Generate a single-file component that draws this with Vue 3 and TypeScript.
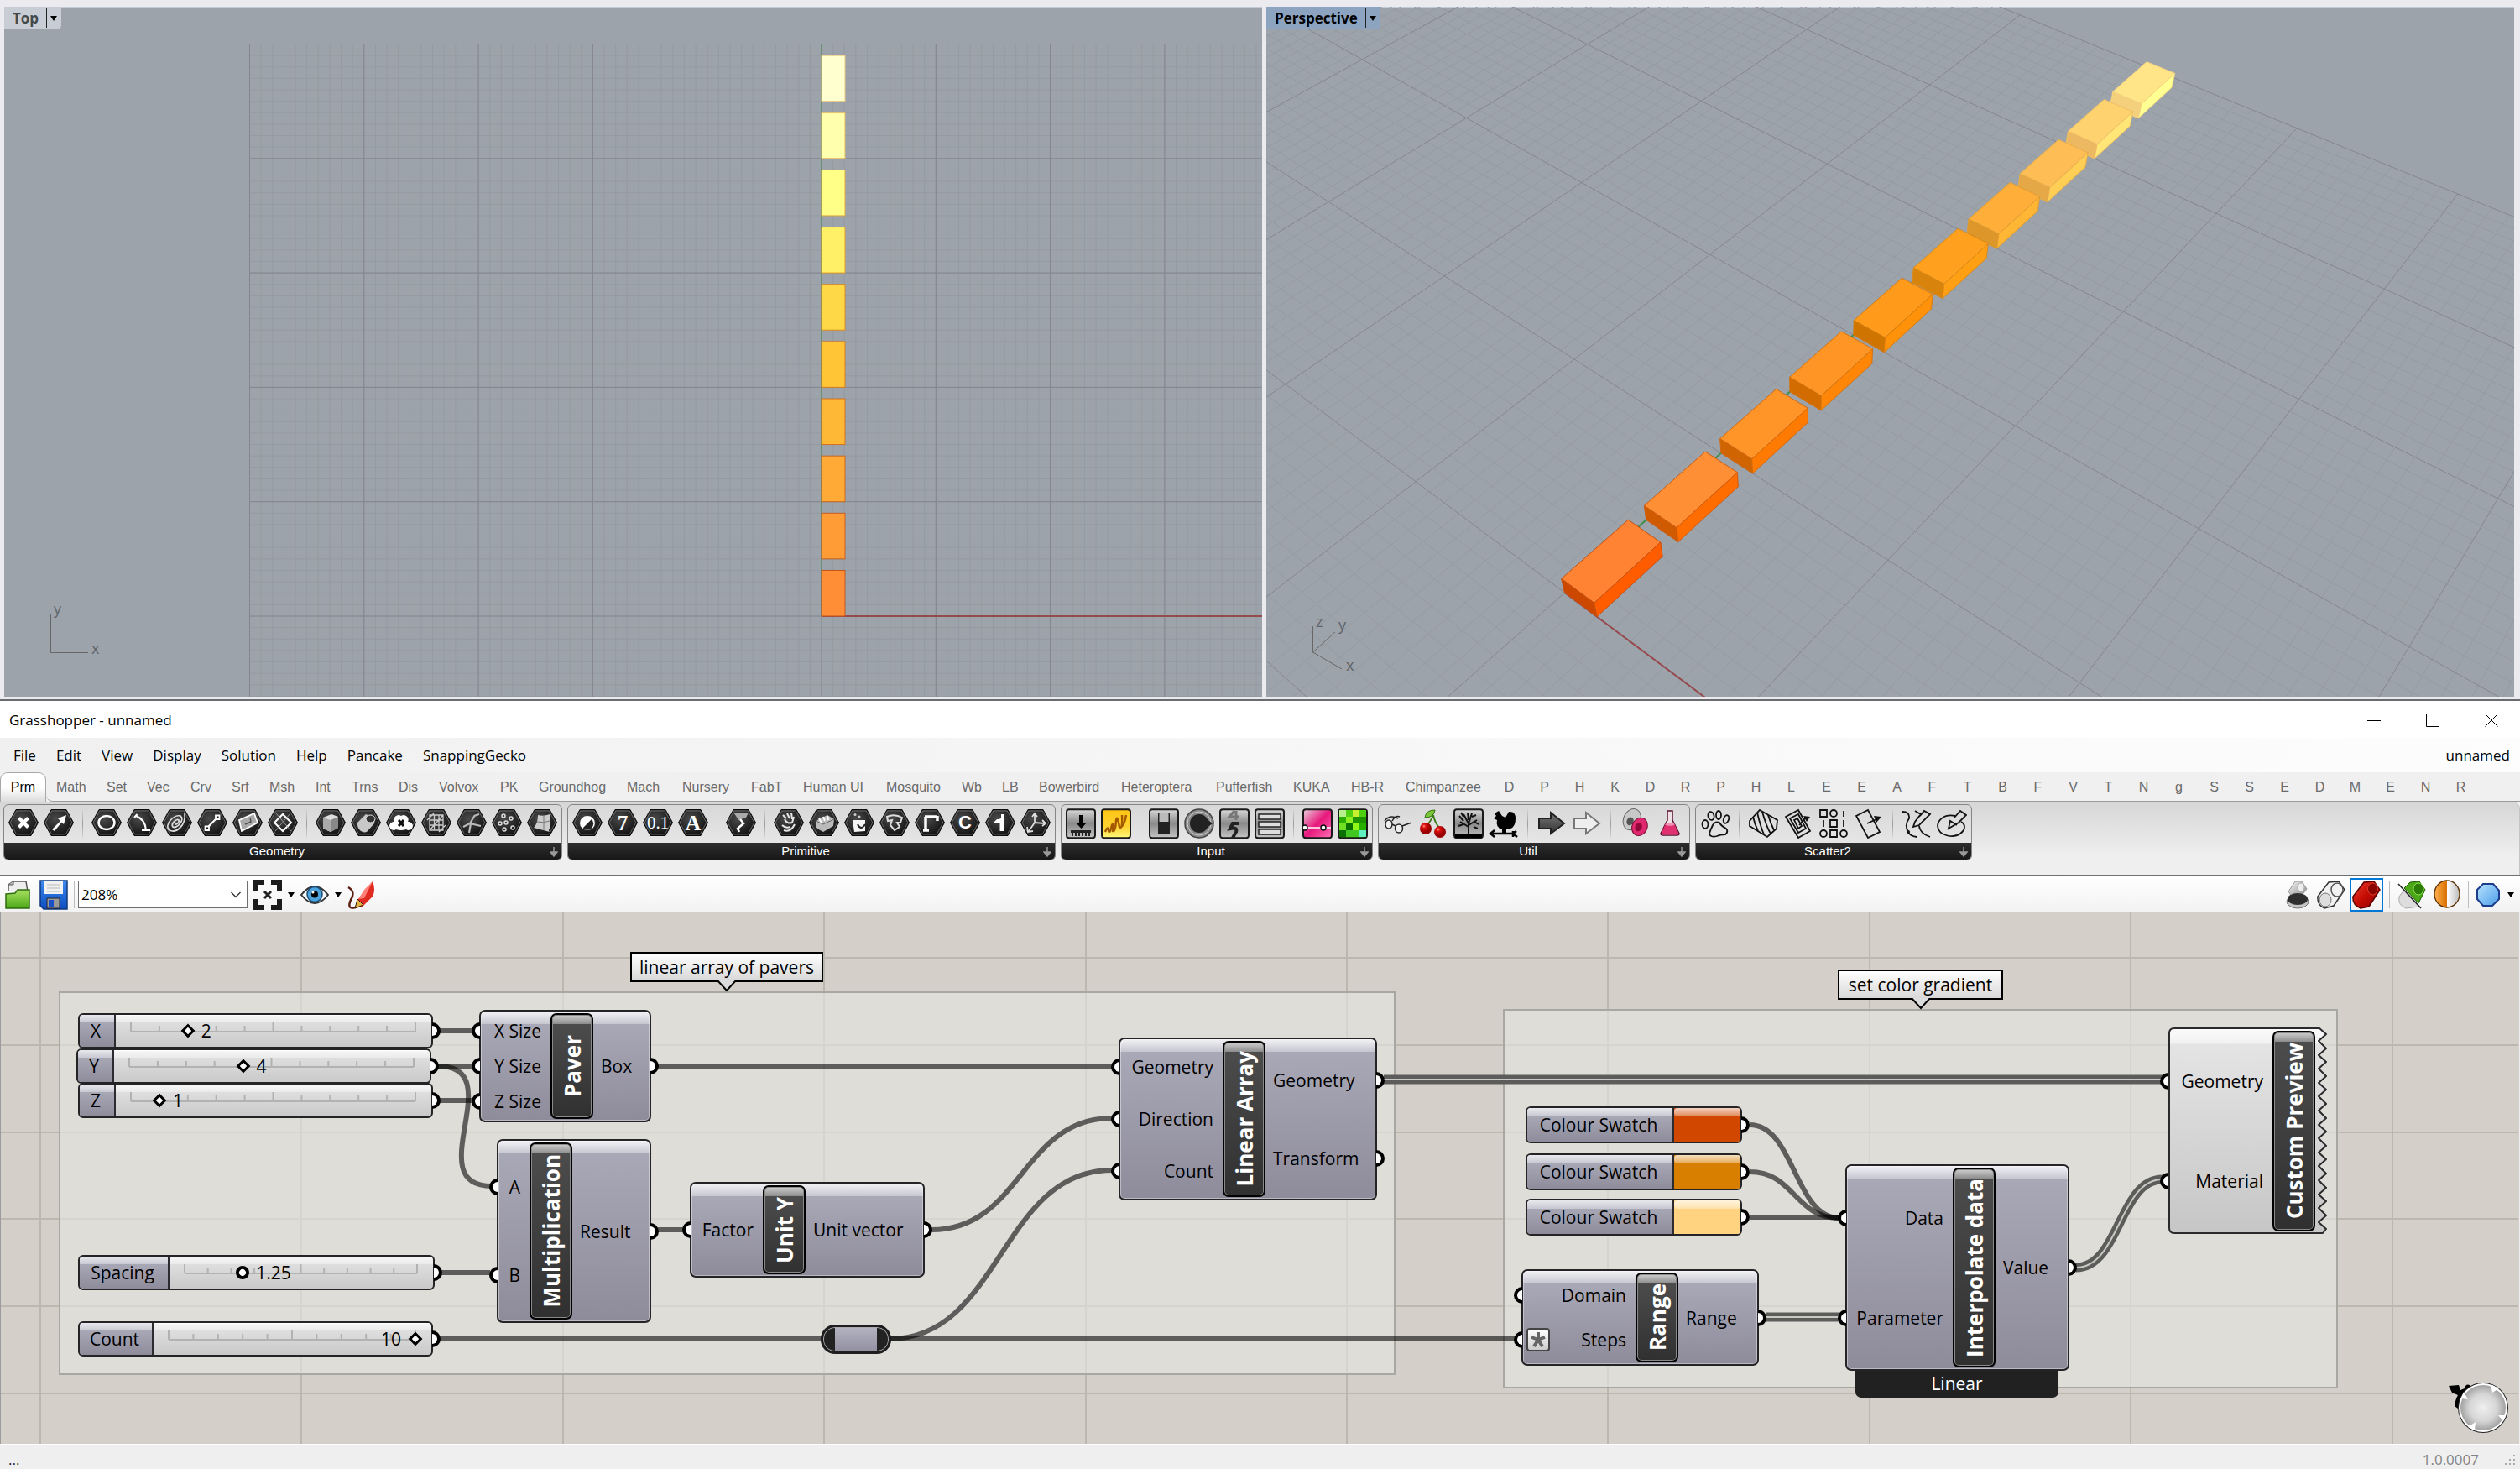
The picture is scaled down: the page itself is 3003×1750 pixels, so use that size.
<script setup lang="ts">
import { ref, computed } from 'vue'

interface Tab { name: string; width: number }
interface Panel { name: string; items: string[] }
interface Slider { name: string; x: number; y: number; w: number; label: number; min: number; max: number; step: number; value: number; round?: boolean; before?: boolean; mid: number }
interface NodeBox { title: string; x: number; y: number; w: number; h: number; lead: number; inputs: string[]; outputs: string[]; foot?: string; boxed?: string }
interface Segment { x1: number; y1: number; x2: number; y2: number; major: boolean }

/* ---------- top viewport ---------- */
const unit = 13.63
const originX = 974
const originY = 726
const gridLeft = originX - 50 * unit
const gridTop = originY - 50 * unit
const steps = Array.from({ length: 101 }, (_, i) => i)
const planColors = ['#ff8e36', '#ff9c36', '#ffaa36', '#ffb836', '#ffc536', '#ffd848', '#fff068', '#ffff88', '#ffffae', '#ffffd0']
const edgeColors = ['#c4561c', '#c9601c', '#cd681c', '#d2721c', '#d67c1c', '#da881c', '#e09a28', '#e2aa40', '#e6b860', '#ecc880']
const plan = planColors.map((fill, i) => ({
  fill,
  stroke: edgeColors[i],
  y: originY - (5 * i + 4) * unit,
}))

/* ---------- perspective viewport ---------- */
function project(x: number, y: number, z = 0): [number, number] {
  const w = 1 - 0.00704 * x + 0.00904 * y - 0.01285 * z
  return [
    355.5 + (18.98 * x + 20.32 * y - 3.75 * z) / w,
    698 + (14.16 * x - 18.12 * y - 16.39 * z) / w,
  ]
}
function pts(list: [number, number, number][]): string {
  return list.map((p) => project(p[0], p[1], p[2]).map((n) => n.toFixed(1)).join(',')).join(' ')
}
const floor: Segment[] = []
for (const major of [false, true]) {
  for (let i = -50; i <= 50; i++) {
    if ((i % 10 === 0) !== major) continue
    const a = project(i, -50), b = project(i, 50)
    const c = project(-50, i), d = project(50, i)
    floor.push({ x1: a[0], y1: a[1], x2: b[0], y2: b[1], major })
    floor.push({ x1: c[0], y1: c[1], x2: d[0], y2: d[1], major })
  }
}
const shades = [
  ['#ff8333', '#cc4700', '#ff5c00', '#c65010'],
  ['#ff8f34', '#d05a00', '#ff6c00', '#cc5c10'],
  ['#ff9429', '#d06400', '#ff7a00', '#d06a10'],
  ['#ff9524', '#d26c00', '#ff8606', '#d27410'],
  ['#ff9a1a', '#d07400', '#ff9208', '#d47c10'],
  ['#ffa01f', '#d8840c', '#ffa014', '#da8a18'],
  ['#ffae3a', '#dc962a', '#ffb634', '#e09c30'],
  ['#ffbe55', '#e4a846', '#ffce54', '#e8ae4c'],
  ['#ffd270', '#ecb862', '#ffe676', '#eebe66'],
  ['#ffe488', '#f5d07c', '#ffff92', '#f4d480'],
]
const solids = shades.map((s, i) => {
  const a = 5 * i, b = a + 4
  return {
    stroke: s[3],
    faces: [
      { fill: s[0], points: pts([[0, a, 1], [2, a, 1], [2, b, 1], [0, b, 1]]) },
      { fill: s[1], points: pts([[0, a, 0], [2, a, 0], [2, a, 1], [0, a, 1]]) },
      { fill: s[2], points: pts([[2, a, 0], [2, b, 0], [2, b, 1], [2, a, 1]]) },
    ],
  }
}).reverse()
const o = project(0, 0), xEnd = project(40, 0), yEnd = project(0, 50)

/* ---------- menus and tabs ---------- */
const menus = ['File', 'Edit', 'View', 'Display', 'Solution', 'Help', 'Pancake', 'SnappingGecko']
const tabs: Tab[] = [
  { name: 'Math', width: 60 }, { name: 'Set', width: 48 }, { name: 'Vec', width: 52 }, { name: 'Crv', width: 49 },
  { name: 'Srf', width: 45 }, { name: 'Msh', width: 55 }, { name: 'Int', width: 43 }, { name: 'Trns', width: 56 },
  { name: 'Dis', width: 48 }, { name: 'Volvox', width: 73 }, { name: 'PK', width: 46 }, { name: 'Groundhog', width: 105 },
  { name: 'Mach', width: 66 }, { name: 'Nursery', width: 82 }, { name: 'FabT', width: 62 }, { name: 'Human UI', width: 99 },
  { name: 'Mosquito', width: 90 }, { name: 'Wb', width: 48 }, { name: 'LB', width: 44 }, { name: 'Bowerbird', width: 98 },
  { name: 'Heteroptera', width: 113 }, { name: 'Pufferfish', width: 92 }, { name: 'KUKA', width: 69 }, { name: 'HB-R', width: 65 },
  { name: 'Chimpanzee', width: 102 },
]
const letters = 'DPHKDRPHLEEAFTBFVTNgSSEDMENR'.split('')

/* ---------- ribbon icons ---------- */
const hex = (inner: string) =>
  `<path d="M9 1.5H27L35.5 17L27 32.5H9L.5 17Z" fill="url(#g-hex)" stroke="#0c0c0c"/><path d="M9.8 3H26.2L33.8 17L26.2 31H9.8L2.2 17Z" fill="none" stroke="#777" stroke-width=".8"/>${inner}`
const tile = (inner: string, fill = 'url(#g-tile)') =>
  `<rect x="1" y="1.2" width="34" height="34" rx="3" fill="${fill}" stroke="#1a1a1a" stroke-width="2"/>${inner}`
const w = 'fill="none" stroke="#fff" stroke-width="2"'
const k = 'fill="none" stroke="#111" stroke-width="1.8"'
const letter = (s: string, size: number, family = 'Liberation Serif', weight = 700) =>
  `<text x="18" y="${17 + size * 0.34}" text-anchor="middle" font-family="${family}" font-weight="${weight}" font-size="${size}" fill="#fff">${s}</text>`

const icons: Record<string, string> = {
  point: hex(`<path d="M12.5 11.500L23.500 22.500M23.500 11.500L12.500 22.500" fill="none" stroke="#fff" stroke-width="4"/>`),
  vector: hex(`<path d="M10 25L20 15L17 12L27 8L24 19L21.500 16.500L13 27Z" fill="#fff"/>`),
  circle: hex(`<ellipse cx="18" cy="17" rx="9.500" ry="8" fill="none" stroke="#fff" stroke-width="2.500"/>`),
  arc: hex(`<path d="M11 9Q22 13 23 26M9 11L12.500 7M18 26H28" ${w}/>`),
  curve: hex(`<path d="M27 6C29 20 17 30 9 26C2 20 14 7 22 9C28 14 17 25 13 22C10 18 18 12 20 14C21 17 18 19 16 19" fill="none" stroke="#ddd" stroke-width="1.800"/>`),
  line: hex(`<path d="M12 23L24 11" ${w}/><path d="M9.500 21.500H14V26H9.500ZM22 8.500H26.500V13H22Z" fill="#111" stroke="#fff" stroke-width="1.800"/>`),
  plane: hex(`<path d="M8 14L26 6L30 17L11 27Z" fill="#aaa" stroke="#fff" stroke-width="1.800"/><path d="M15 19L22 16L21 11" fill="none" stroke="#555" stroke-width="1.500"/>`),
  rect: hex(`<path d="M18 7L28 17L18 27L8 17Z" ${w}/><path d="M10 6L28 27M27 6L9 27" stroke="#999" stroke-width="1"/>`),
  box: hex(`<path d="M9 11L19 7L27 10V23L18 28L9 24Z" fill="#ddd"/><path d="M9 11L18 14V28L9 24Z" fill="#aaa"/><path d="M18 14L27 10V23L18 28Z" fill="#888"/>`),
  brep: hex(`<path d="M8 17L18 7L29 12L28 18L19 28C13 30 7 24 8 17Z" fill="#c8c8c8"/><ellipse cx="23.500" cy="12.500" rx="5.500" ry="4.500" fill="#333" stroke="#eee"/>`),
  group: hex(`<path d="M12 25A5 5 0 1 1 10 16A5.500 5.500 0 0 1 18 9A5.500 5.500 0 0 1 26 16A5 5 0 1 1 24 25Q18 27 12 25Z" fill="#fff"/><path d="M15 14L21 21M21 14L15 21" stroke="#111" stroke-width="3"/>`),
  mesh: hex(`<path d="M10 8H26V26H10ZM10 14H26M10 20H26M15.500 8V26M21 8V26M7 14L15 6M21 28L29 20M10 26L26 8" fill="none" stroke="#ccc" stroke-width="1.300"/>`),
  voronoi: hex(`<path d="M8 22L16 18L22 8M16 18L29 21M17 18L15 29M21 9L27 7" fill="none" stroke="#bbb" stroke-width="2.200"/>`),
  points: hex(`<g fill="none" stroke="#ddd" stroke-width="1.500"><circle cx="14" cy="9" r="2"/><circle cx="23" cy="12" r="2"/><circle cx="10" cy="18" r="2"/><circle cx="17" cy="17" r="2"/><circle cx="25" cy="23" r="2"/><circle cx="15" cy="25" r="2"/></g>`),
  surface: hex(`<path d="M13 8Q20 10 27 7V24Q25 26 27 28L8 23Q13 18 13 8Z" fill="#ccc"/><path d="M20 9V26M12 16Q20 18 27 15" stroke="#777" fill="none"/>`),

  bool: hex(`<ellipse cx="18" cy="17.500" rx="9" ry="8.500" fill="#fff"/><path d="M23 13A6 6 0 0 1 12.500 23.500Z" fill="#222"/>`),
  integer: hex(letter('7', 25)),
  number: hex(letter('0.1', 21, 'Liberation Serif', 400)),
  text: hex(letter('A', 26)),
  colour: hex(`<path d="M9 5H27L24 11L15 14L12 9Z" fill="#aaa"/><path d="M17 13L21 18L14 24L16 28" fill="none" stroke="#fff" stroke-width="2.500"/>`),
  domain: hex(`<path d="M11 8L15 12M16 6L19 12M21 5L22 13M13 13Q16 19 22 17L24 10M10 20Q14 24 20 22M12 26Q20 29 25 19" fill="none" stroke="#e8e8e8" stroke-width="2"/>`),
  domain2: hex(`<path d="M8 15L22 8L30 13L29 21L17 28L8 23Z" fill="#bbb"/><path d="M12 12L15 17M17 10L19 15M22 9L23 14" stroke="#fff" stroke-width="2"/><path d="M8 15L17 19L30 13" fill="none" stroke="#666"/>`),
  matrix: hex(`<path d="M10 14H25V27L12 28Z" fill="#f4f4f4"/><circle cx="13" cy="7.500" r="1.500" fill="#ccc"/><circle cx="18" cy="10" r="1.500" fill="#ccc"/><path d="M16 19Q20 27 25 19" fill="none" stroke="#222" stroke-width="2"/>`),
  guid: hex(`<path d="M9 10Q18 6 27 11L25 17H21L24 22L18 26L13 20L15 14L10 15Z" fill="none" stroke="#ddd" stroke-width="2"/>`),
  path: hex(`<path d="M12 10H27M13 10V24M27 9V15M10 26H17" fill="none" stroke="#fff" stroke-width="3.500"/>`),
  culture: hex(letter('C', 22, 'Liberation Sans')),
  time: hex(`<path d="M10 17H19V27H23V7H19V13H14" fill="#fff"/><path d="M19 12V27" stroke="#fff" stroke-width="3"/>`),
  transform: hex(`<path d="M17 17V7M17 17L29 18M17 17L10 27M14 10L17 6L20 10M26 14L30 18L26 21M8 22L9 28L15 27" fill="none" stroke="#ddd" stroke-width="1.800"/>`),

  button: tile(`<path d="M16 8H21V17H25L18.500 24L12 17H16Z" fill="#000"/><path d="M6 26H30V29H6Z" fill="#222"/><path d="M8 29V33M12 29V33M16 29V33M20 29V33M24 29V33M28 29V33" stroke="#222" stroke-width="2"/>`),
  sketch: tile(`<path d="M5 28Q8 20 9 26Q10 32 13 20Q15 16 14 27Q17 28 18 15Q19 6 22 22Q26 26 25 8M24 22Q28 20 30 8" fill="none" stroke="#a65a00" stroke-width="2.500"/>`, 'url(#g-yellow)'),
  toggle: tile(`<path d="M11 5H25V31H11Z" fill="#222"/><path d="M12.500 6H23.500V16H12.500Z" fill="#bbb"/>`),
  knob: `<circle cx="18" cy="18" r="17" fill="#888" stroke="#444" stroke-width="1.500"/><circle cx="18" cy="18" r="14" fill="none" stroke="#ccc"/><circle cx="18" cy="18" r="11" fill="#222"/><path d="M26 12L34 18L26 24Z" fill="#222"/>`,
  digit: tile(`<path d="M18 3L12 10H23M20 3V14" fill="none" stroke="#777" stroke-width="3"/><path d="M24 18H16L13 24Q22 22 20 28L16 35" fill="none" stroke="#222" stroke-width="4"/>`),
  list: tile(`<g fill="#ddd" stroke="#222" stroke-width="1.500"><path d="M5 7H31V13H5ZM5 16H31V22H5ZM5 25H31V31H5Z"/></g>`),
  gradient: tile(`<path d="M2 23H34" stroke="#fff" stroke-width="1.500"/><g fill="#fff" stroke="#111" stroke-width="1.500"><circle cx="3" cy="23" r="3"/><circle cx="25" cy="23" r="3"/></g>`, 'url(#g-pink)'),
  image: tile(`<path d="M2 2H10V10H2Z" fill="#b8f090"/><path d="M10 2H18V10H10ZM26 2H34V10H26Z" fill="#4fd010"/><path d="M18 2H26V10H18Z" fill="#c8f030"/><path d="M2 10H10V18H2Z" fill="#2cae00"/><path d="M10 10H18V18H10Z" fill="#8cf020"/><path d="M18 10H34V18H18Z" fill="#209400"/><path d="M2 18H10V26H2Z" fill="#70e020"/><path d="M10 18H18V26H10ZM2 26H10V34H2Z" fill="#0a7000"/><path d="M18 18H26V26H18Z" fill="#90f818"/><path d="M26 18H34V26H26Z" fill="#28b000"/><path d="M10 26H26V34H10Z" fill="#40c820"/><path d="M26 26H34V34H26Z" fill="#60f0c0"/>`, '#3c0'),

  glasses: `<g fill="#eee" stroke="#222" stroke-width="1.500"><ellipse cx="7" cy="19" rx="4" ry="5"/><ellipse cx="19" cy="24" rx="4.500" ry="5"/></g><path d="M2 15Q8 7 18 12M11 19L15 21M23 21L34 17M11 15Q15 8 20 10" fill="none" stroke="#222" stroke-width="1.500"/>`,
  cherry: `<path d="M18 8Q15 16 9 21M18 8Q20 18 26 24" fill="none" stroke="#3a7a14" stroke-width="1.800"/><path d="M8 11Q9 2 20 2Q19 11 8 11Z" fill="#7bc83a" stroke="#356e10"/><circle cx="9" cy="24" r="7" fill="url(#g-red)"/><circle cx="26" cy="28" r="7" fill="url(#g-red)"/>`,
  tree: tile(`<path d="M2 30H34V35H2Z" fill="#000"/><path d="M18 31V18M18 22L8 16M18 20L28 14M18 18L12 7M18 18L22 6M12 15L7 9M25 16L30 19M22 10L27 8M12 10L9 5M18 14L17 5M24 22L29 24M12 19L6 21" fill="none" stroke="#111" stroke-width="2"/>`),
  rooster: `<path d="M7 6L12 3L16 9L20 11L24 4Q32 3 32 12Q32 22 26 24L21 25V29H16V25Q8 23 10 14L6 12L9 9Z" fill="#000"/><path d="M4 30H30M7 26L2 30L7 34M29 27V34M33 27L29 30L34 34" fill="none" stroke="#000" stroke-width="2.500"/>`,
  arrowDark: `<path d="M3 12H17V5L33 18L17 30V24H3Z" fill="url(#g-dark)" stroke="#222" stroke-width="2"/>`,
  arrowLight: `<path d="M3 12H17V5L33 18L17 30V24H3Z" fill="#eee" stroke="#777" stroke-width="2"/>`,
  clusters: `<g transform="rotate(25 18 18)"><ellipse cx="13" cy="15" rx="10" ry="13" fill="#c8c8c8" stroke="#666"/><ellipse cx="12" cy="18" rx="4" ry="5" fill="#555"/><ellipse cx="25" cy="19" rx="9" ry="11" fill="#e02870" stroke="#701030"/><ellipse cx="24" cy="20" rx="4" ry="5" fill="#900838"/></g>`,
  flask: `<path d="M15 3H21V14L29 30Q29 32 26 32H10Q7 32 7 30L15 14Z" fill="#f0e0e6" stroke="#5a1030" stroke-width="1.500"/><path d="M12.500 19H23.500L28.500 30Q28 31.500 26 31.500H10Q8 31.500 7.500 30Z" fill="#e03070"/><ellipse cx="18" cy="19" rx="5.500" ry="1.800" fill="#f090b0"/>`,

  paw: `<g ${k}><ellipse cx="6" cy="19" rx="3.500" ry="5"/><ellipse cx="13" cy="9" rx="3.500" ry="5" transform="rotate(-15 13 9)"/><ellipse cx="22" cy="8" rx="3" ry="5"/><ellipse cx="31" cy="13" rx="3" ry="5" transform="rotate(20 31 13)"/><path d="M15 20Q18 15 23 17Q25 21 31 24Q34 28 30 31Q24 31 20 33Q12 35 11 30Q12 26 15 20Z"/></g>`,
  stripes: `<g ${k}><path d="M14 2L35 14L34 24L23 34L2 21L2 15Z"/><path d="M11 5Q15 22 19 31M6 10Q8 19 12 27M17 4Q22 22 27 30M24 8Q27 18 31 26"/></g>`,
  rects: `<g ${k}><path d="M3 10L18 2L32 27L18 35Z"/><path d="M8 12L18 7L27 24L18 29Z"/><path d="M13 14L17 12L22 21L18 24Z"/><path d="M19 20L27 11"/></g><path d="M24 9L32 10L28 16Z" fill="#111"/>`,
  pattern: `<g ${k}><path d="M2 2H10V10H2ZM14 14H22V22H14ZM14 26H22V34H14ZM30 3V10M6 14V22M30 14V22"/><circle cx="18" cy="6" r="4"/><circle cx="6" cy="30" r="4"/><circle cx="30" cy="30" r="4"/></g>`,
  sheet: `<g ${k}><path d="M3 9L17 2L31 28L17 35Z"/><path d="M16 18L27 13"/></g><path d="M24 9L33 10L27 17Z" fill="#111"/>`,
  pencils: `<g ${k}><path d="M1 4Q10 4 9 12Q3 20 8 28Q10 33 18 34M16 3L23 7L16 16L14 22L21 20L34 7L27 3L22 9M21 21Q22 30 34 34"/></g><circle cx="8" cy="28" r="2" fill="#111"/>`,
  brush: `<g ${k}><path d="M22 9C8 6 1 15 1 21C2 33 20 36 28 30C36 24 33 18 29 16"/><path d="M20 12L28 3L35 8L26 17L14 24L16 15L24 20"/></g>`,
}
const panels: Panel[] = [
  { name: 'Geometry', items: ['point', 'vector', '|', 'circle', 'arc', 'curve', 'line', 'plane', 'rect', '|', 'box', 'brep', 'group', 'mesh', 'voronoi', 'points', 'surface'] },
  { name: 'Primitive', items: ['bool', 'integer', 'number', 'text', '|', 'colour', '|', 'domain', 'domain2', 'matrix', 'guid', 'path', 'culture', 'time', 'transform'] },
  { name: 'Input', items: ['button', 'sketch', '|', 'toggle', 'knob', 'digit', 'list', '|', 'gradient', 'image'] },
  { name: 'Util', items: ['glasses', 'cherry', 'tree', 'rooster', '|', 'arrowDark', 'arrowLight', '|', 'clusters', 'flask'] },
  { name: 'Scatter2', items: ['paw', '|', 'stripes', 'rects', 'pattern', 'sheet', '|', 'pencils', 'brush'] },
]

/* ---------- canvas ---------- */
const zoom = ref('208%')
const columns = Array.from({ length: 10 }, (_, i) => 48 + Math.round(i * 311.4))
const rows = Array.from({ length: 6 }, (_, i) => 54 + Math.round(i * 103.8))

const sliders = ref<Slider[]>([
  { name: 'X', x: 93, y: 120, w: 423, label: 43, min: 0, max: 10, step: 1, value: 2, mid: 5 },
  { name: 'Y', x: 91, y: 162, w: 423, label: 43, min: 0, max: 10, step: 1, value: 4, mid: 5 },
  { name: 'Z', x: 93, y: 203, w: 423, label: 43, min: 0, max: 10, step: 1, value: 1, mid: 5 },
  { name: 'Spacing', x: 93, y: 408, w: 425, label: 107, min: 1, max: 2, step: 0.01, value: 1.25, round: true, mid: 5 },
  { name: 'Count', x: 93, y: 487, w: 423, label: 88, min: 0, max: 10, step: 1, value: 10, before: true, mid: 5 },
])
const percent = (s: Slider) => ((s.value - s.min) / (s.max - s.min)) * 100

const nodes: NodeBox[] = [
  { title: 'Paver', x: 571, y: 116, w: 205, h: 134, lead: 85, inputs: ['X Size', 'Y Size', 'Z Size'], outputs: ['Box'] },
  { title: 'Multiplication', x: 592, y: 270, w: 184, h: 219, lead: 39, inputs: ['A', 'B'], outputs: ['Result'] },
  { title: 'Unit Y', x: 822, y: 321, w: 280, h: 114, lead: 87, inputs: ['Factor'], outputs: ['Unit vector'] },
  { title: 'Linear Array', x: 1333, y: 149, w: 308, h: 194, lead: 124, inputs: ['Geometry', 'Direction', 'Count'], outputs: ['Geometry', 'Transform'] },
  { title: 'Range', x: 1813, y: 425, w: 283, h: 115, lead: 136, inputs: ['Domain', 'Steps'], outputs: ['Range'], boxed: 'Steps' },
  { title: 'Interpolate data', x: 2199, y: 300, w: 267, h: 246, lead: 128, inputs: ['Data', 'Parameter'], outputs: ['Value'], foot: 'Linear' },
]
const swatches = ref([
  { id: 'swatch-a', y: 231, color: '#d14700' },
  { id: 'swatch-b', y: 287, color: '#d97f00' },
  { id: 'swatch-c', y: 341, color: '#ffd37f' },
])

function wire(x1: number, y1: number, x2: number, y2: number, pull = Math.abs(x2 - x1) / 2): string {
  return `M${x1} ${y1}C${x1 + pull} ${y1} ${x2 - pull} ${y2} ${x2} ${y2}`
}
const wires = [
  wire(524, 141, 563, 141), wire(522, 183, 563, 183), wire(524, 224, 563, 224),
  wire(522, 183, 586, 326, 88), wire(524, 429, 584, 429), wire(784, 378, 814, 378),
  wire(784, 183, 1325, 183), wire(1110, 378, 1325, 245), wire(524, 508, 980, 508),
  wire(1060, 508, 1325, 307), wire(1060, 508, 1805, 508),
  wire(2085, 253, 2192, 364), wire(2085, 309, 2192, 364), wire(2085, 363, 2192, 363),
]
const treeWires = [wire(1649, 199, 2577, 199), wire(2104, 482, 2192, 482), wire(2474, 423, 2577, 318)]

const jagged = computed(() => {
  let d = 'M181 2'
  for (let i = 0; i < 15; i++) {
    d += `L189 ${9 + Math.round(i * 16.6)}`
    if (i < 14) d += `L180 ${17 + Math.round(i * 16.6)}`
  }
  return `${d}L185 246H8Q2 246 2 240V8Q2 2 8 2Z`
})
</script>

<template>
  <main class="app">
    <svg class="defs" width="0" height="0" aria-hidden="true">
      <defs>
        <radialGradient id="g-hex" cx=".4" cy=".35" r=".7"><stop offset="0" stop-color="#4a4a4a" /><stop offset="1" stop-color="#0e0e0e" /></radialGradient>
        <linearGradient id="g-tile" x2="0" y2="1"><stop offset="0" stop-color="#d8d8d8" /><stop offset=".5" stop-color="#8a8a8a" /><stop offset="1" stop-color="#c4c4c4" /></linearGradient>
        <linearGradient id="g-yellow" x2="0" y2="1"><stop offset="0" stop-color="#ffc414" /><stop offset=".6" stop-color="#ffd230" /><stop offset="1" stop-color="#fff87a" /></linearGradient>
        <linearGradient id="g-pink" y2="1"><stop offset="0" stop-color="#e8d0dc" /><stop offset=".5" stop-color="#e8187c" /><stop offset="1" stop-color="#ff70b4" /></linearGradient>
        <linearGradient id="g-dark" x2="0" y2="1"><stop offset="0" stop-color="#777" /><stop offset="1" stop-color="#333" /></linearGradient>
        <radialGradient id="g-red" cx=".35" cy=".3"><stop offset="0" stop-color="#ff9a90" /><stop offset=".3" stop-color="#e01010" /><stop offset="1" stop-color="#900" /></radialGradient>
        <linearGradient id="g-red-body" y2="1"><stop offset="0" stop-color="#f04030" /><stop offset=".5" stop-color="#c40c04" /><stop offset="1" stop-color="#8a0400" /></linearGradient>
        <linearGradient id="g-grey-body" y2="1"><stop offset="0" stop-color="#f4f4f4" /><stop offset="1" stop-color="#8c8c8c" /></linearGradient>
        <linearGradient id="g-blue" x2="0" y2="1"><stop offset="0" stop-color="#3c8cf0" /><stop offset="1" stop-color="#0c4cc0" /></linearGradient>
        <linearGradient id="g-sky" y2="1"><stop offset="0" stop-color="#b8e4ff" /><stop offset="1" stop-color="#4c9ce8" /></linearGradient>
        <linearGradient id="g-green" x2="0" y2="1"><stop offset="0" stop-color="#a8e060" /><stop offset="1" stop-color="#4ca818" /></linearGradient>
        <linearGradient id="g-orange"><stop offset="0" stop-color="#ffb050" /><stop offset=".5" stop-color="#d87000" /><stop offset=".5" stop-color="#fff" /><stop offset="1" stop-color="#bbb" /></linearGradient>
        <radialGradient id="g-ball"><stop offset="0" stop-color="#efefef" /><stop offset=".6" stop-color="#d6d6d6" /><stop offset="1" stop-color="#a2a2a2" /></radialGradient>
        <linearGradient id="g-paper" x2="0" y2="1"><stop offset="0" stop-color="#fbfbfb" /><stop offset=".07" stop-color="#f2f2f2" /><stop offset=".08" stop-color="#e4e4e4" /><stop offset="1" stop-color="#c6c6c6" /></linearGradient>
      </defs>
    </svg>

    <section class="viewports">
      <div class="pane plan">
        <svg class="scene">
          <g stroke="#959ba2">
            <template v-for="i in steps" :key="i">
              <line :x1="gridLeft + i * unit" :x2="gridLeft + i * unit" :y1="gridTop" y2="100%" />
              <line :x1="gridLeft" x2="100%" :y1="gridTop + i * unit" :y2="gridTop + i * unit" />
            </template>
          </g>
          <g stroke="#84868f">
            <template v-for="i in 10" :key="i">
              <line :x1="gridLeft + (i - 1) * 10 * unit" :x2="gridLeft + (i - 1) * 10 * unit" :y1="gridTop" y2="100%" />
              <line :x1="gridLeft" x2="100%" :y1="gridTop + (i - 1) * 10 * unit" :y2="gridTop + (i - 1) * 10 * unit" />
            </template>
          </g>
          <line :x1="originX" :x2="originX" :y1="gridTop" :y2="originY" stroke="#3f8f4a" />
          <line :x1="originX" x2="100%" :y1="originY" :y2="originY" stroke="#964a4e" stroke-width="2" />
          <rect v-for="b in plan" :key="b.y" :x="originX" :y="b.y" width="28" height="54.5" :fill="b.fill" :stroke="b.stroke" />
          <path d="M55.500 724V769.500H100" fill="none" stroke="#666" />
          <text x="59" y="724" class="axis">y</text>
          <text x="104" y="771" class="axis">x</text>
        </svg>
        <button class="view-name">Top<span class="split"></span><span class="caret"></span></button>
      </div>
      <div class="pane persp">
        <svg class="scene">
          <line v-for="(s, i) in floor" :key="i" :x1="s.x1" :y1="s.y1" :x2="s.x2" :y2="s.y2" :stroke="s.major ? '#84868f' : '#959ba2'" />
          <line :x1="o[0]" :y1="o[1]" :x2="xEnd[0]" :y2="xEnd[1]" stroke="#964a4e" stroke-width="2" />
          <line :x1="o[0]" :y1="o[1]" :x2="yEnd[0]" :y2="yEnd[1]" stroke="#3f8f4a" stroke-width="2" />
          <g v-for="(s, i) in solids" :key="i" :stroke="s.stroke" stroke-linejoin="round">
            <polygon v-for="(f, j) in s.faces" :key="j" :points="f.points" :fill="f.fill" />
          </g>
          <path d="M55.500 738V769L82 745M55.500 769L90 789" fill="none" stroke="#666" />
          <text x="59" y="739" class="axis">z</text>
          <text x="86" y="743" class="axis">y</text>
          <text x="95" y="791" class="axis">x</text>
        </svg>
        <button class="view-name active">Perspective<span class="split"></span><span class="caret"></span></button>
      </div>
    </section>

    <header class="titlebar">
      <h1>Grasshopper - unnamed</h1>
      <div class="window-buttons">
        <button aria-label="Minimize"><svg width="16" height="16"><path d="M0 8.500H16" stroke="#000" /></svg></button>
        <button aria-label="Maximize"><svg width="16" height="16"><path d="M.5.5H15.500V15.500H.5Z" fill="none" stroke="#000" /></svg></button>
        <button aria-label="Close"><svg width="16" height="16"><path d="M.5.5L15.500 15.500M15.500.5L.5 15.500" stroke="#000" /></svg></button>
      </div>
    </header>

    <nav class="menubar">
      <button v-for="m in menus" :key="m">{{ m }}</button>
      <span class="doc-name">unnamed</span>
    </nav>

    <div class="tabs" role="tablist">
      <button class="tab current" role="tab" aria-selected="true">Prm</button>
      <div class="tab-strip">
        <button v-for="t in tabs" :key="t.name" class="tab" role="tab" :style="{ width: t.width + 'px' }">{{ t.name }}</button>
        <button v-for="(l, i) in letters" :key="i" class="tab letter" role="tab">{{ l }}</button>
      </div>
    </div>

    <section class="ribbon">
      <div v-for="p in panels" :key="p.name" class="panel">
        <div class="panel-icons">
          <template v-for="(item, i) in p.items" :key="i">
            <span v-if="item === '|'" class="divider"></span>
            <button v-else class="icon" :aria-label="item"><svg width="36" height="36" viewBox="0 0 36 36" v-html="icons[item]"></svg></button>
          </template>
        </div>
        <div class="panel-foot">
          <span>{{ p.name }}</span>
          <svg width="10" height="12" viewBox="0 0 10 12"><path d="M5 0V8M1 6L5 11L9 6Z" fill="#999" stroke="#999" stroke-width="1.500" /></svg>
        </div>
      </div>
    </section>

    <section class="toolbar">
      <button class="tool" aria-label="Open">
        <svg width="30" height="36" viewBox="0 0 30 36"><path d="M4 14V6L10 2H25L27 14" fill="#eee" stroke="#555" stroke-width="1.500" /><path d="M4 6H10V2" fill="#bbb" stroke="#555" /><path d="M1 17L12 16L15 12H29V34H1Z" fill="url(#g-green)" stroke="#2c6e10" stroke-width="1.500" /></svg>
      </button>
      <button class="tool save" aria-label="Save">
        <svg width="34" height="36" viewBox="0 0 34 36"><path d="M1 1H33V35H5L1 31Z" fill="url(#g-blue)" stroke="#123a7c" stroke-width="1.500" /><path d="M6 2H28V17H6Z" fill="#f0f0f0" /><path d="M9 6H25M9 10H25M9 14H25" stroke="#bbb" /><path d="M9 22H24V34H9Z" fill="#999" stroke="#223" /><path d="M11 24H17V33H11Z" fill="#1c50c8" /></svg>
      </button>
      <span class="rule"></span>
      <div class="zoom-box">
        <select v-model="zoom" aria-label="Zoom"><option>208%</option><option>100%</option><option>50%</option></select>
        <svg width="12" height="8"><path d="M.5 1L6 6.500L11.500 1" fill="none" stroke="#333" stroke-width="1.300" /></svg>
      </div>
      <button class="tool" aria-label="Zoom extents">
        <svg width="34" height="36" viewBox="0 0 34 36"><path d="M3 13V3H13M21 3H31V13M31 23V33H21M13 33H3V23" fill="none" stroke="#1c1c1c" stroke-width="6" /><path d="M13 14L21 22M21 14L13 22" stroke="#222" stroke-width="3" /></svg>
      </button>
      <span class="caret"></span>
      <button class="tool" aria-label="Preview">
        <svg width="34" height="36" viewBox="0 0 34 36"><path d="M1 18Q17 -2 33 18Q17 38 1 18Z" fill="#f4f8fa" stroke="#333" stroke-width="2" /><circle cx="17" cy="17.500" r="9" fill="#4ca4dc" stroke="#1c4c78" stroke-width="1.500" /><circle cx="17" cy="17.500" r="4" fill="#000" /><circle cx="15" cy="15" r="1.500" fill="#fff" /></svg>
      </button>
      <span class="caret"></span>
      <button class="tool" aria-label="Sketch">
        <svg width="34" height="36" viewBox="0 0 34 36"><path d="M1 9Q10 14 4 24Q-1 36 9 33" fill="none" stroke="#5a1c10" stroke-width="2.500" /><path d="M30 2Q34 12 30 20L18 32L9 34L12 24Z" fill="#e02c20" /><path d="M30 2L20 12L13 23L20 22Z" fill="#ff8078" /><path d="M12 23L19 30L9 34Z" fill="#e0b040" stroke="#3c1808" /></svg>
      </button>
      <span class="grow"></span>
      <div class="display-tools">
        <button class="tool" aria-label="No preview"><svg width="28" height="36" viewBox="0 0 28 36"><path d="M3 14L11 2H19L25 11L18 20H7Z" fill="url(#g-grey-body)" stroke="#999" /><ellipse cx="18" cy="9" rx="4" ry="5" fill="#eee" stroke="#aaa" /><ellipse cx="14" cy="26" rx="13" ry="8" fill="#c4c4c4" stroke="#777" /><ellipse cx="14" cy="23" rx="12" ry="7" fill="#2e2e2e" /></svg></button>
        <button class="tool" aria-label="Wireframe preview"><svg width="34" height="36" viewBox="0 0 34 36"><path d="M1 20L14 3L26 2L33 12L20 31L9 34Q0 30 1 20Z" fill="#f2f2f2" stroke="#333" stroke-width="1.500" /><ellipse cx="24" cy="12" rx="7" ry="8" fill="none" stroke="#555" stroke-width="1.500" /><ellipse cx="10" cy="24" rx="7" ry="8" fill="#ddd" stroke="#777" /></svg></button>
        <button class="tool pressed" aria-label="Shaded preview"><svg width="34" height="36" viewBox="0 0 34 36"><path d="M1 20L14 3L26 2L33 12L20 32L10 34Q0 30 1 20Z" fill="url(#g-red-body)" stroke="#5a0000" stroke-width="1.500" /><ellipse cx="24.500" cy="11" rx="6" ry="7" fill="#8a0400" stroke="#e04030" /></svg></button>
        <span class="rule"></span>
        <button class="tool" aria-label="Preview selected"><svg width="34" height="36" viewBox="0 0 34 36"><path d="M2 20L8 12L26 32L10 34Q0 30 2 20Z" fill="#ddd" stroke="#aaa" /><path d="M8 10L15 3L26 2L33 12L25 28Z" fill="#4ca818" stroke="#1c5c00" /><ellipse cx="25" cy="11" rx="6" ry="7" fill="#2c7c08" stroke="#90e050" /><path d="M1 5L28 34" stroke="#222" stroke-width="1.500" /></svg></button>
        <button class="tool" aria-label="Document preview"><svg width="32" height="36" viewBox="0 0 32 36"><ellipse cx="16" cy="17" rx="15" ry="16" fill="url(#g-orange)" stroke="#5c3000" stroke-width="1.300" /></svg></button>
        <span class="rule"></span>
        <button class="tool" aria-label="Mesh quality"><svg width="28" height="30" viewBox="0 0 28 30"><path d="M8 2H20L27 10V20L19 28H8L1 20V9Z" fill="url(#g-sky)" stroke="#1c3c8c" stroke-width="2" /></svg></button>
        <span class="caret"></span>
      </div>
    </section>

    <section class="canvas">
      <svg class="layer">
        <rect v-for="x in columns" :key="'c' + x" :x="x - 1" y="0" width="2" height="100%" fill="#bbb8b0" />
        <rect v-for="y in rows" :key="'r' + y" x="0" :y="y - 1" width="100%" height="2" fill="#bbb8b0" />
        <rect x="71" y="95" width="1591" height="455" fill="#e4e5e2" fill-opacity=".64" stroke="#a8a7a1" stroke-width="2" />
        <rect x="1792" y="116" width="993" height="450" fill="#e4e5e2" fill-opacity=".64" stroke="#a8a7a1" stroke-width="2" />
        <path v-for="(d, i) in wires" :key="i" :d="d" class="wire" />
        <path v-for="(d, i) in treeWires" :key="'t' + i" :d="d" class="wire tree" />
        <path v-for="(d, i) in treeWires" :key="'s' + i" :d="d" class="wire slit" />
      </svg>

      <div class="note note-array">linear array of pavers<svg width="24" height="14"><path d="M1 0L12 12L23 0" fill="#dcdcdc" stroke="#000" stroke-width="2" /></svg></div>
      <div class="note note-color">set color gradient<svg width="24" height="14"><path d="M1 0L12 12L23 0" fill="#dcdcdc" stroke="#000" stroke-width="2" /></svg></div>

      <div v-for="s in sliders" :key="s.name" class="slider" :style="{ left: s.x + 'px', top: s.y + 'px', width: s.w + 'px' }">
        <i class="grip out"></i>
        <div class="slider-body">
          <label :for="'slider-' + s.name" :style="{ width: s.label + 'px' }">{{ s.name }}</label>
          <div class="track">
            <svg class="ticks">
              <line x1="0" x2="100%" y1="20" y2="20" />
              <line v-for="i in 11" :key="i" :x1="(i - 1) * 10 + '%'" :x2="(i - 1) * 10 + '%'" :y1="(i - 1) % s.mid === 0 ? 9 : 13" y2="20" />
            </svg>
            <input :id="'slider-' + s.name" v-model.number="s.value" type="range" :class="{ round: s.round }" :min="s.min" :max="s.max" :step="s.step" />
            <output v-if="s.before" :style="{ right: 100 - percent(s) + '%' }" class="before">{{ s.value }}</output>
            <output v-else :style="{ left: percent(s) + '%' }">{{ s.value }}</output>
          </div>
        </div>
      </div>

      <div v-for="n in nodes" :key="n.title" class="node" :style="{ left: n.x + 'px', top: n.y + 'px', width: n.w + 'px', height: n.h + 'px' }">
        <div v-if="n.foot" class="node-foot">{{ n.foot }}</div>
        <div class="node-body"></div>
        <ul class="inputs" :style="{ width: n.lead + 'px' }">
          <li v-for="p in n.inputs" :key="p"><i class="grip in"></i>
            <span v-if="n.boxed === p" class="star"><svg width="20" height="20" viewBox="0 0 20 20"><path d="M10 10V1M10 10L18 7M10 10L15 18M10 10L5 18M10 10L2 7" stroke="#666" stroke-width="4" /></svg></span>{{ p }}</li>
        </ul>
        <div class="capsule"><span>{{ n.title }}</span></div>
        <ul class="outputs">
          <li v-for="p in n.outputs" :key="p">{{ p }}<i class="grip out"></i></li>
        </ul>
      </div>

      <div v-for="s in swatches" :key="s.id" class="swatch" :style="{ top: s.y + 'px' }">
        <i class="grip out"></i>
        <div class="swatch-body">
          <label :for="s.id">Colour Swatch</label>
          <input :id="s.id" v-model="s.color" type="color" />
        </div>
      </div>

      <div class="relay"></div>

      <div class="node preview">
        <svg class="paper" width="192" height="248"><path :d="jagged" fill="url(#g-paper)" stroke="#2a2a2c" stroke-width="2" stroke-linejoin="round" /></svg>
        <ul class="inputs">
          <li><i class="grip in"></i>Geometry</li>
          <li><i class="grip in"></i>Material</li>
        </ul>
        <div class="capsule"><span>Custom Preview</span></div>
      </div>

      <svg class="compass" width="76" height="66" viewBox="0 0 76 66">
        <path d="M1 8L13 7L15 13L20 11Q22 4 27 8L12 35L8 32Q9 24 12 19L5 16Z" fill="#000" />
        <circle cx="42" cy="34" r="30" fill="#222" />
        <circle cx="42" cy="34" r="29" fill="#fff" />
        <circle cx="42" cy="34" r="27" fill="url(#g-ball)" />
        <path d="M51 6L61 11L53 16ZM69 43L60 43L66 50ZM33 51L24 57L32 61ZM16 23L24 24L19 15Z" fill="#fff" />
      </svg>
    </section>

    <footer class="status">
      <span>...</span>
      <span class="version">1.0.0007</span>
      <svg width="14" height="14"><path d="M10 1h2v2h-2zM10 6h2v2h-2zM10 11h2v2h-2zM5 6h2v2h-2zM5 11h2v2h-2zM0 11h2v2h-2z" fill="#aaa" /></svg>
    </footer>
  </main>
</template>

<style>
body {
  margin: 0;
}
</style>

<style scoped>
* {
  box-sizing: border-box;
}
.app {
  display: flex;
  flex-direction: column;
  min-height: 100vh;
  background: #f0f0f0;
  color: #000;
  font: 17px/24px "Open Sans", "Noto Sans", sans-serif;
}
.defs {
  position: absolute;
}
button {
  margin: 0;
  padding: 0;
  border: 0;
  background: none;
  color: inherit;
  font: inherit;
}
svg {
  display: block;
  flex: none;
}
.caret {
  flex: none;
  border: 4px solid transparent;
  border-top: 6px solid #000;
  border-bottom: 0;
}

.viewports {
  display: flex;
  gap: 5px;
  height: 835px;
  padding: 8px 7px 3px 5px;
  background: #ebebef;
  border-bottom: 2px solid #6a6c70;
}
.pane {
  position: relative;
  flex: 1487;
  overflow: hidden;
  background: #9da3aa;
  box-shadow: inset 0 1px #c4c9d6;
}
.plan {
  flex: 1499;
}
.scene {
  width: 100%;
  height: 100%;
}
.axis {
  font: 18px "Open Sans", sans-serif;
  fill: #60646a;
}
.view-name {
  position: absolute;
  top: 0;
  left: 0;
  display: flex;
  align-items: center;
  height: 27px;
  padding: 0 5px 0 10px;
  border-radius: 0 0 5px 0;
  background: #c8cdd5;
  color: #444a4c;
  font-weight: 700;
}
.view-name.active {
  background: #8da4c0;
  color: #000;
}
.split {
  width: 1px;
  height: 23px;
  margin: 0 4px 0 9px;
  background: #222;
}

.titlebar {
  display: flex;
  align-items: center;
  justify-content: space-between;
  height: 44px;
  padding: 1px 26px 0 11px;
  background: #fff;
}
.titlebar h1 {
  margin: 0;
  font-size: 17px;
  font-weight: 400;
}
.window-buttons {
  display: flex;
  gap: 54px;
}
.menubar {
  display: flex;
  align-items: center;
  gap: 24px;
  height: 41px;
  padding: 1px 12px 0 16px;
  background: linear-gradient(90deg, #f0f0f0, #fdfdfd);
}
.doc-name {
  margin-left: auto;
}

.tabs {
  display: flex;
  height: 35px;
  background: #f0f0f0;
  font: 16px/20px "Liberation Sans", Arial, sans-serif;
}
.tab-strip {
  display: flex;
  flex: 1;
  padding: 1px 0 0 12px;
  border-bottom: 1px solid #9a9a9a;
  border-radius: 0 0 0 8px;
  overflow: hidden;
}
.tab {
  flex: none;
  color: #6a6a6a;
  text-align: left;
}
.tab.letter {
  width: 42px;
  padding-left: 1px;
  text-align: center;
}
.tab.current {
  width: 55px;
  border: 1px solid #a8a8a8;
  border-bottom: 0;
  border-radius: 9px 9px 0 0;
  background: linear-gradient(#fff 50%, #dcdcdc);
  color: #000;
  text-align: center;
}

.ribbon {
  display: flex;
  gap: 6px;
  align-items: flex-start;
  height: 87px;
  padding: 3px 4px 0;
  border-radius: 0 9px 0 0;
  background: linear-gradient(#d6d6d6, #efefef 75%);
  box-shadow: inset -1px 0 #c4c4c4;
}
.panel {
  overflow: hidden;
  height: 67px;
  border: 1px solid #858585;
  border-radius: 6px;
  background: linear-gradient(#d8d8d8, #ececec);
}
.panel-icons {
  display: flex;
  gap: 6px;
  height: 45px;
  padding: 4px 5px 0;
}
.icon {
  width: 36px;
  height: 36px;
}
.divider {
  width: 1px;
  height: 38px;
  margin: 0 4px;
  background: linear-gradient(#d8d8d8, #9c9c9c, #e4e4e4);
}
.panel-foot {
  display: flex;
  align-items: center;
  height: 21px;
  padding-right: 4px;
  background: linear-gradient(#2e2e2e, #161616);
  color: #fff;
  font: 15px/18px "Liberation Sans", Arial, sans-serif;
}
.panel-foot span {
  flex: 1;
  margin-top: -2px;
  text-align: center;
}

.toolbar {
  display: flex;
  align-items: center;
  gap: 7px;
  height: 45px;
  padding: 0 7px 0 6px;
  border-top: 2px solid #707070;
  background: linear-gradient(#fff, #f2f2f2);
}
.tool {
  display: flex;
  align-items: center;
  justify-content: center;
  flex: none;
}
.save {
  margin-left: 4px;
}
.rule {
  width: 1px;
  height: 33px;
  background: #bdbdbd;
}
.toolbar > .rule {
  margin-right: -3px;
}
.zoom-box {
  position: relative;
  width: 202px;
  height: 33px;
}
.zoom-box select {
  width: 100%;
  height: 100%;
  padding: 0 3px;
  border: 1px solid #6e6e6e;
  background: #fff;
  color: #000;
  font: inherit;
  appearance: none;
}
.zoom-box svg {
  position: absolute;
  top: 13px;
  right: 8px;
  pointer-events: none;
}
.grow {
  flex: 1;
}
.display-tools {
  display: flex;
  align-items: center;
  gap: 9px;
}
.display-tools .pressed {
  width: 40px;
  height: 40px;
  margin: 0 -2px 0 -4px;
  border: 2px solid #0078d7;
}

.canvas {
  position: relative;
  flex: 1 0 633px;
  overflow: hidden;
  border-left: 1px solid #9c9c9c;
  border-right: 1px solid #f0f0f0;
  background: #d4cfc8;
  font-size: 21px;
  line-height: 28px;
}
.layer {
  position: absolute;
  width: 100%;
  height: 100%;
  margin-left: -1px;
}
.wire {
  fill: none;
  stroke: rgba(0, 0, 0, 0.58);
  stroke-width: 6px;
}
.wire.tree {
  stroke: #5c5c5a;
  stroke-width: 11px;
}
.wire.slit {
  stroke: #c8c8c4;
  stroke-width: 2px;
}
.slider,
.node,
.swatch,
.relay,
.note,
.compass {
  position: absolute;
  margin-left: -1px;
}
.compass {
  right: 9px;
  bottom: 11px;
}

.grip {
  position: absolute;
  top: calc(50% - 10px);
  width: 10px;
  height: 20px;
  border: 4px solid #000;
  background: #fff;
}
.grip.out {
  right: -9px;
  border-left: 0;
  border-radius: 0 10px 10px 0;
}
.grip.in {
  left: -9px;
  border-right: 0;
  border-radius: 10px 0 0 10px;
}

.note {
  display: flex;
  align-items: center;
  justify-content: center;
  height: 36px;
  border: 2px solid #000;
  background: linear-gradient(#fff, #d8d8d8);
}
.note svg {
  position: absolute;
  top: 32px;
  left: calc(50% - 12px);
}
.note-array {
  top: 47px;
  left: 751px;
  width: 230px;
}
.note-color {
  top: 68px;
  left: 2190px;
  width: 197px;
}

.slider {
  height: 42px;
}
.slider-body,
.swatch-body {
  display: flex;
  height: 100%;
  overflow: hidden;
  border: 2px solid #242426;
  border-radius: 6px;
  background: linear-gradient(#f7f7f7, #eaeaea 24%, #dedede 25%, #c9c9c9);
  box-shadow: inset 0 1px #fff;
}
.slider label,
.swatch label {
  display: flex;
  flex: none;
  align-items: center;
  justify-content: center;
  padding-right: 3px;
  border-right: 2px solid #2c2c30;
  background: linear-gradient(#e8e8ee, #c8c8d2 24%, #a8a7b6 25%, #8e8c9b);
}
.track {
  position: relative;
  flex: 1;
  margin: 0 19px 0 18px;
}
.ticks {
  position: absolute;
  width: 100%;
  height: 38px;
  overflow: visible;
  stroke: #b2b2b2;
  stroke-width: 2px;
}
.track input {
  position: absolute;
  top: 0;
  left: -6px;
  width: calc(100% + 12px);
  height: 38px;
  margin: 0;
  background: none;
  appearance: none;
}
.track input::-webkit-slider-thumb {
  width: 12px;
  height: 12px;
  border: 3px solid #000;
  background: #fff;
  transform: rotate(45deg);
  appearance: none;
}
.track input.round {
  left: -8px;
  width: calc(100% + 16px);
}
.track input.round::-webkit-slider-thumb {
  width: 16px;
  height: 16px;
  border-width: 4px;
  border-radius: 50%;
}
.track output {
  position: absolute;
  top: 5px;
  margin-left: 16px;
}
.track output.before {
  margin-right: 17px;
}

.node {
  display: flex;
  padding: 4px 0;
}
.node ul {
  position: relative;
  display: flex;
  flex-direction: column;
  flex: none;
  margin: 0;
  padding: 0;
  list-style: none;
}
.node li {
  position: relative;
  display: flex;
  flex: 1;
  align-items: center;
}
.node .inputs li {
  justify-content: flex-end;
  padding-right: 11px;
}
.node .outputs {
  flex: 1;
}
.node .outputs li {
  padding-left: 9px;
}
.node-body {
  position: absolute;
  inset: 0;
  border: 2px solid #242426;
  border-radius: 7px;
  background: linear-gradient(#f2f2f6, #c6c6d0 15px, #a9a8b7 15px, #8e8c9b);
  box-shadow: inset 0 0 0 1px rgba(255, 255, 255, 0.4);
}
.capsule {
  position: relative;
  display: flex;
  flex: none;
  align-items: center;
  justify-content: center;
  width: 51px;
  border: 2px solid #000;
  border-radius: 7px;
  background: linear-gradient(#cfcfcf, #8c8c8c 11px, #4c4c4c 11px, #303030);
  box-shadow: inset 0 0 0 1px #8a8a8a;
}
.capsule span {
  color: #fff;
  font-size: 26px;
  font-weight: 700;
  line-height: 36px;
  white-space: nowrap;
  writing-mode: vertical-rl;
  transform: rotate(180deg);
}
.node-foot {
  position: absolute;
  top: 100%;
  left: 12px;
  right: 13px;
  height: 33px;
  margin-top: -1px;
  padding-top: 2px;
  border-radius: 0 0 7px 7px;
  background: #212121;
  color: #fff;
  text-align: center;
}
.star {
  position: absolute;
  left: 6px;
  display: flex;
  align-items: center;
  justify-content: center;
  width: 28px;
  height: 28px;
  border: 2px solid #444;
  border-radius: 4px;
  background: linear-gradient(#fff, #ccc);
}
.preview {
  top: 136px;
  left: 2583px;
  width: 190px;
  height: 248px;
  padding: 5px 0 4px;
}
.preview .paper {
  position: absolute;
  top: 0;
  left: 0;
}
.preview .inputs {
  width: 125px;
}

.swatch {
  left: 1818px;
  width: 258px;
  height: 44px;
}
.swatch label {
  width: 175px;
}
.swatch input {
  position: relative;
  flex: 1;
  width: 0;
  height: 100%;
  padding: 0;
  border: 0;
  background: none;
  appearance: none;
}
.swatch input::-webkit-color-swatch-wrapper {
  padding: 0;
}
.swatch input::-webkit-color-swatch {
  border: 0;
  border-radius: 0;
}
.swatch-body::after {
  content: "";
  position: absolute;
  top: 2px;
  right: 2px;
  width: 79px;
  height: 10px;
  border-radius: 4px;
  background: linear-gradient(rgba(255, 255, 255, 0.75), rgba(255, 255, 255, 0.35));
  pointer-events: none;
}
.relay {
  top: 491px;
  left: 978px;
  width: 84px;
  height: 35px;
  border: 3px solid #1e1e20;
  border-radius: 17px;
  background: linear-gradient(90deg, #222 14px, transparent 14px calc(100% - 14px), #222 calc(100% - 14px)), linear-gradient(#b4b3c2, #9290a0);
  box-shadow: inset 0 0 0 1px #aaa;
}

.status {
  display: flex;
  align-items: center;
  height: 30px;
  padding: 6px 4px 0 10px;
  border-top: 2px solid #fff;
  background: #efefef;
  color: #838383;
}
.status span:first-child {
  color: #222;
}
.version {
  margin: 0 31px 0 auto;
}
</style>
